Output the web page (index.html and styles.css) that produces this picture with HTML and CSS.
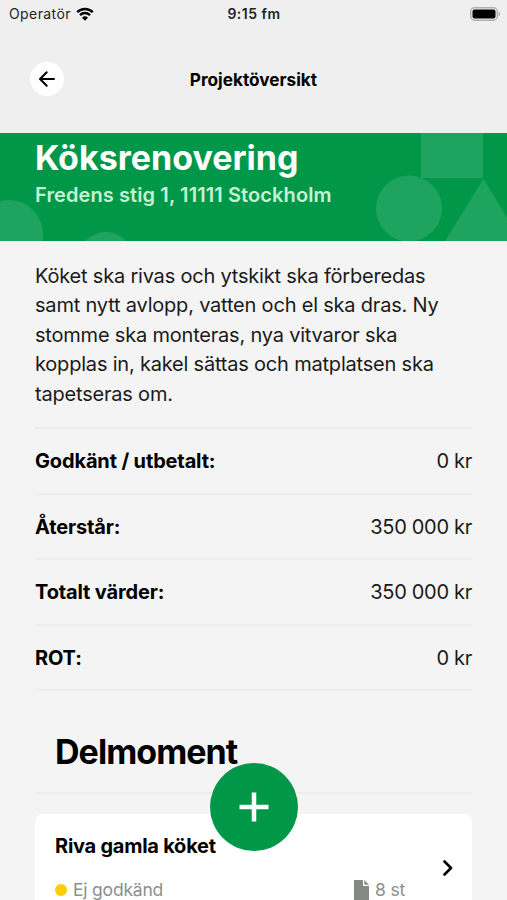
FILE: index.html
```html
<!DOCTYPE html>
<html lang="sv">
<head>
  <meta charset="UTF-8" />
  <meta name="viewport" content="width=device-width, initial-scale=1" />
  <title>Projektöversikt</title>
  <link rel="stylesheet" href="styles.css">
</head>
<body>

  <div class="statusbar">
    <div class="operator">
      <span class="operator-name">Operatör</span>
      <svg class="wifi" viewBox="0 0 18 14" width="18" height="14">
        <path d="M1.2 5.1A11.2 11.2 0 0 1 16.8 5.1M4 8.1A7.1 7.1 0 0 1 14 8.1" fill="none" stroke="#000" stroke-width="2.4" />
        <path d="M9 13.7L6 10.7A4.3 4.3 0 0 1 12 10.7Z" />
      </svg>
    </div>
    <div class="time">9:15 fm</div>
    <svg class="battery" viewBox="0 0 32 14" width="32" height="14">
      <rect x=".7" y=".7" width="26.6" height="12.6" rx="4" fill="none" stroke="#b0b0b0" stroke-width="1.4" />
      <rect x="2.5" y="2.5" width="23" height="9" rx="2" />
      <path d="M28.6 4.8C30.7 5.2 30.7 8.8 28.6 9.2Z" fill="#b0b0b0" />
    </svg>
  </div>

  <header class="header">
    <button class="back" aria-label="Tillbaka">
      <svg viewBox="0 0 18 18" width="18" height="18">
        <path d="M16 9H2.5M8.7 2.3L2 9L8.7 15.7" />
      </svg>
    </button>
    <h1 class="header-title">Projektöversikt</h1>
  </header>

  <section class="banner">
    <svg class="banner-shapes" viewBox="0 0 507 108" width="507" height="108">
      <circle cx="9" cy="101" r="34" />
      <circle cx="106" cy="127" r="28" />
      <rect x="421" y="0" width="62" height="45" />
      <circle cx="409" cy="75.5" r="33" />
      <path d="M483.5 46L521 108H445Z" />
    </svg>
    <h2 class="project-name">Köksrenovering</h2>
    <p class="project-address">Fredens stig 1, 11111 Stockholm</p>
  </section>

  <main class="content">
    <p class="description">Köket ska rivas och ytskikt ska förberedas<br>samt nytt avlopp, vatten och el ska dras. Ny<br>stomme ska monteras, nya vitvaror ska<br>kopplas in, kakel sättas och matplatsen ska<br>tapetseras om.</p>

    <div class="stat">
      <div class="stat-label">Godkänt / utbetalt:</div>
      <div class="stat-value">0 kr</div>
    </div>
    <div class="stat">
      <div class="stat-label">Återstår:</div>
      <div class="stat-value">350 000 kr</div>
    </div>
    <div class="stat">
      <div class="stat-label">Totalt värder:</div>
      <div class="stat-value">350 000 kr</div>
    </div>
    <div class="stat">
      <div class="stat-label">ROT:</div>
      <div class="stat-value">0 kr</div>
    </div>

    <h2 class="section-title">Delmoment</h2>

    <div class="card">
      <div class="card-body">
        <h3 class="card-title">Riva gamla köket</h3>
        <div class="card-meta">
          <span class="dot"></span>
          <span class="card-status">Ej godkänd</span>
          <svg class="file" viewBox="0 0 15 20" width="15" height="20">
            <path d="M0 0H9V6H15V20H0ZM10.3 0L15 4.7H10.3Z" />
          </svg>
          <span class="card-count">8 st</span>
        </div>
      </div>
      <svg class="chevron" viewBox="0 0 10 16" width="10" height="16">
        <path d="M1.5 1.5L8 8L1.5 14.5" />
      </svg>
    </div>
  </main>

  <button class="add" aria-label="Lägg till">
    <svg viewBox="0 0 30 30" width="30" height="30">
      <path d="M15 .5V29.5M.5 15H29.5" />
    </svg>
  </button>

</body>
</html>
```
FILE: styles.css
```css
* {
  box-sizing: border-box;
}
body {
  margin: 0;
  height: 900px;
  overflow: hidden;
  font-family: Inter, "Liberation Sans", sans-serif;
  background: #f4f4f4;
  color: #000;
}
h1, h2, h3, p {
  margin: 0;
}
button {
  display: flex;
  align-items: center;
  justify-content: center;
  padding: 0;
  border: none;
  border-radius: 50%;
}
.statusbar {
  display: grid;
  grid-template-columns: 1fr auto 1fr;
  align-items: center;
  height: 27px;
  padding: 0 6px 0 9px;
  background: #efefef;
  font-size: 14px;
}
.operator {
  display: flex;
  align-items: center;
  gap: 5px;
  letter-spacing: .4px;
  color: #222;
}
.time {
  margin-right: 2px;
  font-weight: 600;
  letter-spacing: .5px;
  color: #222;
}
.battery {
  justify-self: end;
  margin-right: -1px;
}
.header {
  display: grid;
  grid-template-columns: 34px 1fr 34px;
  align-items: center;
  height: 106px;
  padding: 0 30px 2px;
  background: #efefef;
}
.back {
  width: 34px;
  height: 34px;
  background: #fff;
}
.back path {
  fill: none;
  stroke: #000;
  stroke-width: 2;
  stroke-linecap: round;
  stroke-linejoin: round;
}
.header-title {
  padding-top: 1px;
  text-align: center;
  font-size: 17.2px;
  font-weight: 700;
}
.banner {
  position: relative;
  height: 108px;
  padding: 4px 35px 0;
  background: #009848;
  overflow: hidden;
}
.banner-shapes {
  position: absolute;
  top: 0;
  left: 0;
  fill: #1ea45e;
}
.project-name {
  position: relative;
  line-height: 42px;
  font-size: 34px;
  font-weight: 700;
  color: #fff;
}
.project-address {
  position: relative;
  margin-top: 4px;
  line-height: 24px;
  font-size: 20px;
  font-weight: 600;
  letter-spacing: .1px;
  color: #c6f2d2;
}
.content {
  padding: 21px 35px 0;
}
.description {
  padding-bottom: 18px;
  border-bottom: 2px solid #ededed;
  line-height: 29.4px;
  font-size: 20px;
  letter-spacing: -.2px;
  color: #1a1a1a;
}
.stat {
  display: flex;
  align-items: center;
  justify-content: space-between;
  height: 65.5px;
  padding-top: 1px;
  border-bottom: 2px solid #ededed;
  font-size: 20px;
}
.stat-label {
  font-weight: 700;
  letter-spacing: -.15px;
}
.stat-value {
  letter-spacing: -.3px;
  color: #1a1a1a;
}
.section-title {
  height: 103px;
  padding: 41px 20px 0;
  border-bottom: 2px solid #ededed;
  line-height: 40px;
  font-size: 34px;
  font-weight: 700;
  letter-spacing: -.95px;
}
.card {
  display: flex;
  align-items: center;
  height: 107px;
  margin-top: 20px;
  padding: 0 19px 0 20px;
  border-radius: 8px;
  background: #fff;
}
.card-body {
  flex: 1;
}
.card-title {
  line-height: 24px;
  font-size: 20px;
  font-weight: 700;
  letter-spacing: -.25px;
}
.card-meta {
  display: flex;
  align-items: center;
  margin-top: 20px;
  line-height: 24px;
  font-size: 17.5px;
  letter-spacing: -.2px;
  color: #8c8f8c;
}
.dot {
  width: 12px;
  height: 12px;
  margin-right: 6px;
  border-radius: 50%;
  background: #fbcf04;
}
.file {
  margin-left: auto;
  margin-right: 6px;
  fill: #858985;
}
.card-count {
  margin-right: 38px;
}
.chevron {
  fill: none;
  stroke: #000;
  stroke-width: 2.6;
  stroke-linecap: round;
  stroke-linejoin: round;
}
.add {
  position: absolute;
  top: 763px;
  left: 210px;
  width: 88px;
  height: 88px;
  background: #009848;
}
.add path {
  stroke: #fff;
  stroke-width: 4.5;
}
```
